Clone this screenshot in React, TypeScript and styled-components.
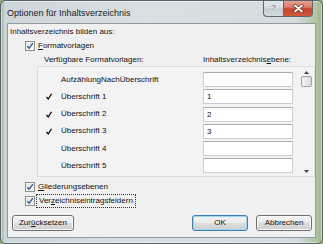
import React from "react";
import styled, { createGlobalStyle, css } from "styled-components";

const GlobalStyle = createGlobalStyle`
  html, body {
    margin: 0;
    padding: 0;
    width: 323px;
    height: 244px;
    overflow: hidden;
    background: #8fa57c;
  }
  * {
    box-sizing: border-box;
  }
`;

const Window = styled.div`
  width: 323px;
  height: 244px;
  display: flex;
  flex-direction: column;
  border: 1px solid #56636c;
  border-radius: 6px;
  background: linear-gradient(
    90deg,
    #a5b596 0,
    #cdd6da 4px,
    #d9e0e4 45%,
    #d4dce0 92%,
    #b3c4a2 98%,
    #9fb68c 100%
  );
  box-shadow: inset 0 0 0 1px rgba(255, 255, 255, 0.45);
  font-family: "Liberation Sans", Arial, sans-serif;
  color: #111;
  overflow: hidden;
`;

const TitleBar = styled.div`
  height: 22px;
  display: flex;
  align-items: flex-start;
`;

const Title = styled.div`
  font-size: 9px;
  line-height: 10px;
  padding: 7px 0 0 6px;
  color: #1a1a1a;
`;

const CaptionButtons = styled.div`
  margin-left: auto;
  margin-right: 9px;
  margin-top: -1px;
  display: flex;
`;

const CaptionButton = styled.div<{ $close?: boolean }>`
  height: 17px;
  width: ${(p) => (p.$close ? "30px" : "20px")};
  display: flex;
  align-items: center;
  justify-content: center;
  border: 1px solid #5d6870;
  border-top: none;
  ${(p) =>
    p.$close
      ? css`
          border-radius: 0 0 4px 0;
          background: linear-gradient(
            180deg,
            #e9a898 0,
            #dc7a66 45%,
            #c8452c 55%,
            #d0583a 100%
          );
        `
      : css`
          border-right: none;
          border-radius: 0 0 0 4px;
          background: linear-gradient(
            180deg,
            #e6eaed 0,
            #d8dee2 45%,
            #c6ced4 55%,
            #d2d9de 100%
          );
          color: #8c979f;
          font-size: 9px;
          font-weight: bold;
          text-shadow: 0 1px 0 #fff;
        `}
`;

const Client = styled.div`
  flex: 1;
  margin: 0 6px 5px 6px;
  border: 1px solid #8d9aa3;
  background: #f0f0f0;
  display: flex;
  flex-direction: column;
  font-size: 8px;
  line-height: 10px;
`;

const SectionLabel = styled.div`
  margin: 3px 0 0 2px;
  height: 10px;
`;

const CheckRow = styled.div<{ $top: number }>`
  margin: ${(p) => p.$top}px 0 0 17px;
  height: 10px;
  display: flex;
  align-items: center;
  gap: 3px;
`;

const CheckBox = styled.div`
  width: 10px;
  height: 10px;
  border: 1px solid #8e8f8f;
  background: linear-gradient(135deg, #dcdcdc 0, #f6f6f6 70%, #ffffff 100%);
  box-shadow: inset 0 0 0 1px #f4f4f4;
  display: flex;
  align-items: center;
  justify-content: center;
`;

const FocusText = styled.span`
  outline: 1px dotted #333;
  outline-offset: 1px;
  padding: 0 1px;
`;

const HeaderRow = styled.div`
  margin-top: 4px;
  height: 10px;
  display: flex;
  padding-left: 36px;
`;

const HeaderLeft = styled.div`
  width: 159px;
`;

const Panel = styled.div`
  margin: 1px 0 0 29px;
  width: 278px;
  height: 111px;
  border: 1px solid #dedede;
  background: #f3f3f3;
  display: flex;
`;

const List = styled.div`
  flex: 1;
  padding-top: 5px;
  display: flex;
  flex-direction: column;
  gap: 2.3px;
`;

const Row = styled.div`
  height: 15px;
  display: flex;
  align-items: center;
`;

const Tick = styled.div`
  width: 23px;
  padding-left: 8px;
  display: flex;
  align-items: center;
`;

const RowLabel = styled.div`
  width: 142px;
`;

const LevelBox = styled.div`
  width: 90px;
  height: 15px;
  border: 1px solid #c9ced6;
  border-top-color: #abadb3;
  background: #fff;
  padding-left: 3px;
  line-height: 13px;
`;

const ScrollBar = styled.div`
  width: 16px;
  display: flex;
  flex-direction: column;
  align-items: center;
  padding: 4px 0 3px;
`;

const Thumb = styled.div`
  margin-top: 2px;
  width: 11px;
  height: 11px;
  border: 1px solid #a2a2a2;
  border-radius: 2px;
  background: linear-gradient(90deg, #f4f4f4, #e6e6e6 50%, #d9d9d9);
`;

const Spacer = styled.div`
  flex: 1;
`;

const ButtonRow = styled.div`
  margin: 9px 3px 0 4px;
  height: 16px;
  display: flex;
  gap: 8px;
`;

const Button = styled.div<{ $width: number; $default?: boolean }>`
  width: ${(p) => p.$width}px;
  height: 16px;
  border: 1px solid ${(p) => (p.$default ? "#3c7fb1" : "#707070")};
  border-radius: 3px;
  background: linear-gradient(
    180deg,
    #f3f3f3 0,
    #ebebeb 48%,
    #dddddd 52%,
    #cfcfcf 100%
  );
  box-shadow: inset 0 0 0 1px
    ${(p) => (p.$default ? "#9fd5f3" : "rgba(255, 255, 255, 0.8)")};
  display: flex;
  align-items: center;
  justify-content: center;
  line-height: 10px;
`;

function Check() {
  return (
    <svg width="8" height="8" viewBox="0 0 8 8">
      <path
        d="M1.2 4.2 L3.1 6.2 L6.9 1.2"
        fill="none"
        stroke="#3f5a92"
        strokeWidth="1.4"
      />
    </svg>
  );
}

function RowTick() {
  return (
    <svg width="6" height="7" viewBox="0 0 6 7">
      <path d="M0.5 4 L2.2 6 L5.5 0.8" fill="none" stroke="#111" strokeWidth="1.3" />
    </svg>
  );
}

function Arrow({ down }: { down?: boolean }) {
  return (
    <svg width="5" height="3" viewBox="0 0 5 3">
      <path d={down ? "M0 0 H5 L2.5 3 Z" : "M0 3 H5 L2.5 0 Z"} fill="#444" />
    </svg>
  );
}

function CloseGlyph() {
  return (
    <svg width="11" height="9" viewBox="0 0 11 9">
      <path d="M2 1.5 L9 7.5 M9 1.5 L2 7.5" stroke="#6b2a1e" strokeWidth="3.2" strokeLinecap="round" />
      <path d="M2 1.5 L9 7.5 M9 1.5 L2 7.5" stroke="#fff" strokeWidth="1.8" strokeLinecap="round" />
    </svg>
  );
}

const styles = [
  { name: "AufzählungNachÜberschrift", level: "", ticked: false },
  { name: "Überschrift 1", level: "1", ticked: true },
  { name: "Überschrift 2", level: "2", ticked: true },
  { name: "Überschrift 3", level: "3", ticked: true },
  { name: "Überschrift 4", level: "", ticked: false },
  { name: "Überschrift 5", level: "", ticked: false },
];

export default function App() {
  return (
    <>
      <GlobalStyle />
      <Window>
        <TitleBar>
          <Title>Optionen für Inhaltsverzeichnis</Title>
          <CaptionButtons>
            <CaptionButton>?</CaptionButton>
            <CaptionButton $close>
              <CloseGlyph />
            </CaptionButton>
          </CaptionButtons>
        </TitleBar>
        <Client>
          <SectionLabel>Inhaltsverzeichnis bilden aus:</SectionLabel>
          <CheckRow $top={4}>
            <CheckBox>
              <Check />
            </CheckBox>
            <span>
              <u>F</u>ormatvorlagen
            </span>
          </CheckRow>
          <HeaderRow>
            <HeaderLeft>Verfügbare Formatvorlagen:</HeaderLeft>
            <div>
              Inhaltsverzeichnis<u>e</u>bene:
            </div>
          </HeaderRow>
          <Panel>
            <List>
              {styles.map((s) => (
                <Row key={s.name}>
                  <Tick>{s.ticked && <RowTick />}</Tick>
                  <RowLabel>{s.name}</RowLabel>
                  <LevelBox>{s.level}</LevelBox>
                </Row>
              ))}
            </List>
            <ScrollBar>
              <Arrow />
              <Thumb />
              <Spacer />
              <Arrow down />
            </ScrollBar>
          </Panel>
          <CheckRow $top={5}>
            <CheckBox>
              <Check />
            </CheckBox>
            <span>
              <u>G</u>liederungsebenen
            </span>
          </CheckRow>
          <CheckRow $top={4}>
            <CheckBox>
              <Check />
            </CheckBox>
            <FocusText>
              Ver<u>z</u>eichniseintragsfeldern
            </FocusText>
          </CheckRow>
          <ButtonRow>
            <Button $width={62}>
              <span>
                Zur<u>ü</u>cksetzen
              </span>
            </Button>
            <Spacer />
            <Button $width={56} $default>
              OK
            </Button>
            <Button $width={56}>Abbrechen</Button>
          </ButtonRow>
        </Client>
      </Window>
    </>
  );
}
